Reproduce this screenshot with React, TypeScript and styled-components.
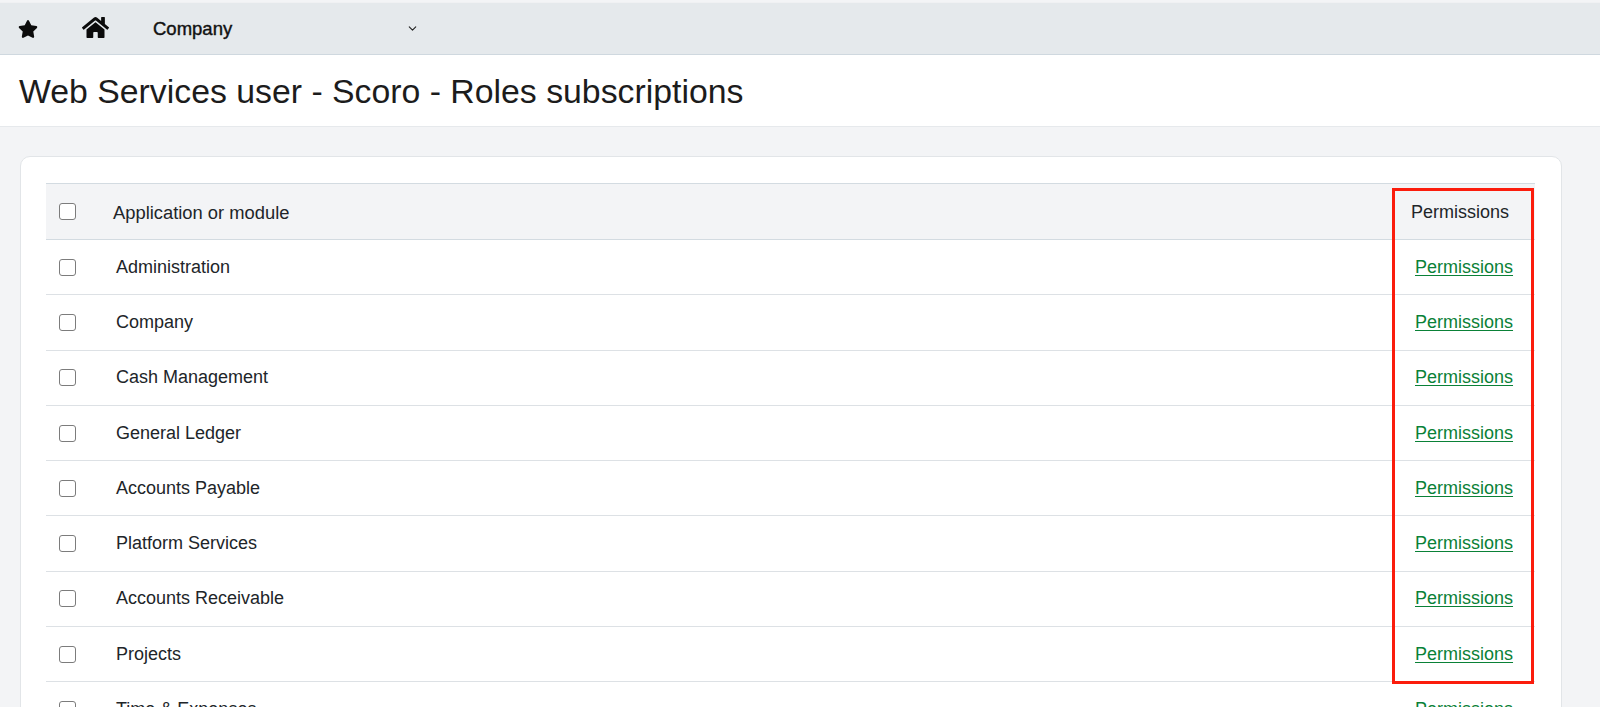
import React from "react";
import styled, { createGlobalStyle } from "styled-components";
import { FaStar, FaHome } from "react-icons/fa";
import { ChevronDown } from "lucide-react";

const Global = createGlobalStyle`
  html, body { margin: 0; height: 707px; overflow: hidden; background: #f3f4f6; }
  body { font-family: "Liberation Sans", Arial, sans-serif; color: #212529; }
  * { box-sizing: border-box; }
`;

const Page = styled.div`
  height: 707px;
  overflow: hidden;
  padding-top: 2px;
  background: #f3f4f6;
`;

const TopBar = styled.nav`
  height: 53px;
  background: #e5e9ec;
  border-top: 1px solid #f0f1f3;
  border-bottom: 1px solid #cfd8df;
  display: flex;
  align-items: center;
  padding-left: 18px;
`;

const StarSlot = styled.span`
  width: 64px;
  display: flex;
  color: #0b0b0b;
  font-size: 20px;
`;

const HomeSlot = styled.span`
  width: 71px;
  display: flex;
  color: #0b0b0b;
  font-size: 27px;
  margin-top: -2px;
`;

const MenuLabel = styled.span`
  width: 253px;
  font-size: 18.5px;
  font-weight: 400;
  -webkit-text-stroke: 0.4px #111;
  color: #111;
`;

const Chevron = styled(ChevronDown)`
  width: 13px;
  height: 13px;
  color: #222;
`;

const TitleBar = styled.header`
  height: 72px;
  background: #fff;
  border-bottom: 1px solid #e6e9ec;
  display: flex;
  align-items: center;
  padding-left: 19px;
  padding-top: 2px;
`;

const Title = styled.h1`
  margin: 0;
  font-size: 33.8px;
  font-weight: 400;
  color: #1c1c1c;
`;

const Card = styled.section`
  position: relative;
  margin: 29px 38px 0 20px;
  padding: 26px 26px 0 25px;
  background: #fff;
  border: 1px solid #e2e5e8;
  border-radius: 10px;
  height: 700px;
`;

const HeaderRow = styled.div`
  display: grid;
  grid-template-columns: 67px 1fr 124px;
  align-items: center;
  height: 57px;
  background: #f3f4f6;
  border-top: 1px solid #d3dbe1;
  border-bottom: 1px solid #d3dbe1;
  font-size: 18px;
`;

const HeaderModule = styled.span`
  font-size: 18.35px;
  padding-top: 2px;
`;

const HeaderPermissions = styled.span`
  padding-top: 2px;
`;

const Row = styled.div`
  display: grid;
  grid-template-columns: 70px 1fr 120px;
  align-items: center;
  height: 55.3px;
  border-bottom: 1px solid #dde1e5;
  font-size: 18px;
`;

const Check = styled.span`
  display: block;
  width: 17px;
  height: 17px;
  margin-left: 13px;
  background: #fff;
  border: 1px solid #7c7c7c;
  border-radius: 3px;
`;

const PermLink = styled.a`
  color: #0a8137;
  text-decoration: underline;
  text-underline-offset: 2px;
  font-size: 18px;
`;

const Highlight = styled.div`
  position: absolute;
  left: 1371px;
  top: 31px;
  width: 142px;
  height: 496px;
  border: 3px solid #fb1c0c;
  pointer-events: none;
`;

const modules = [
  "Administration",
  "Company",
  "Cash Management",
  "General Ledger",
  "Accounts Payable",
  "Platform Services",
  "Accounts Receivable",
  "Projects",
  "Time & Expenses",
];

export default function App() {
  return (
    <Page>
      <Global />
      <TopBar>
        <StarSlot><FaStar /></StarSlot>
        <HomeSlot><FaHome /></HomeSlot>
        <MenuLabel>Company</MenuLabel>
        <Chevron />
      </TopBar>
      <TitleBar>
        <Title>Web Services user - Scoro - Roles subscriptions</Title>
      </TitleBar>
      <Card>
        <HeaderRow>
          <Check />
          <HeaderModule>Application or module</HeaderModule>
          <HeaderPermissions>Permissions</HeaderPermissions>
        </HeaderRow>
        {modules.map((m) => (
          <Row key={m}>
            <Check />
            <span>{m}</span>
            <PermLink href="#">Permissions</PermLink>
          </Row>
        ))}
        <Highlight />
      </Card>
    </Page>
  );
}
